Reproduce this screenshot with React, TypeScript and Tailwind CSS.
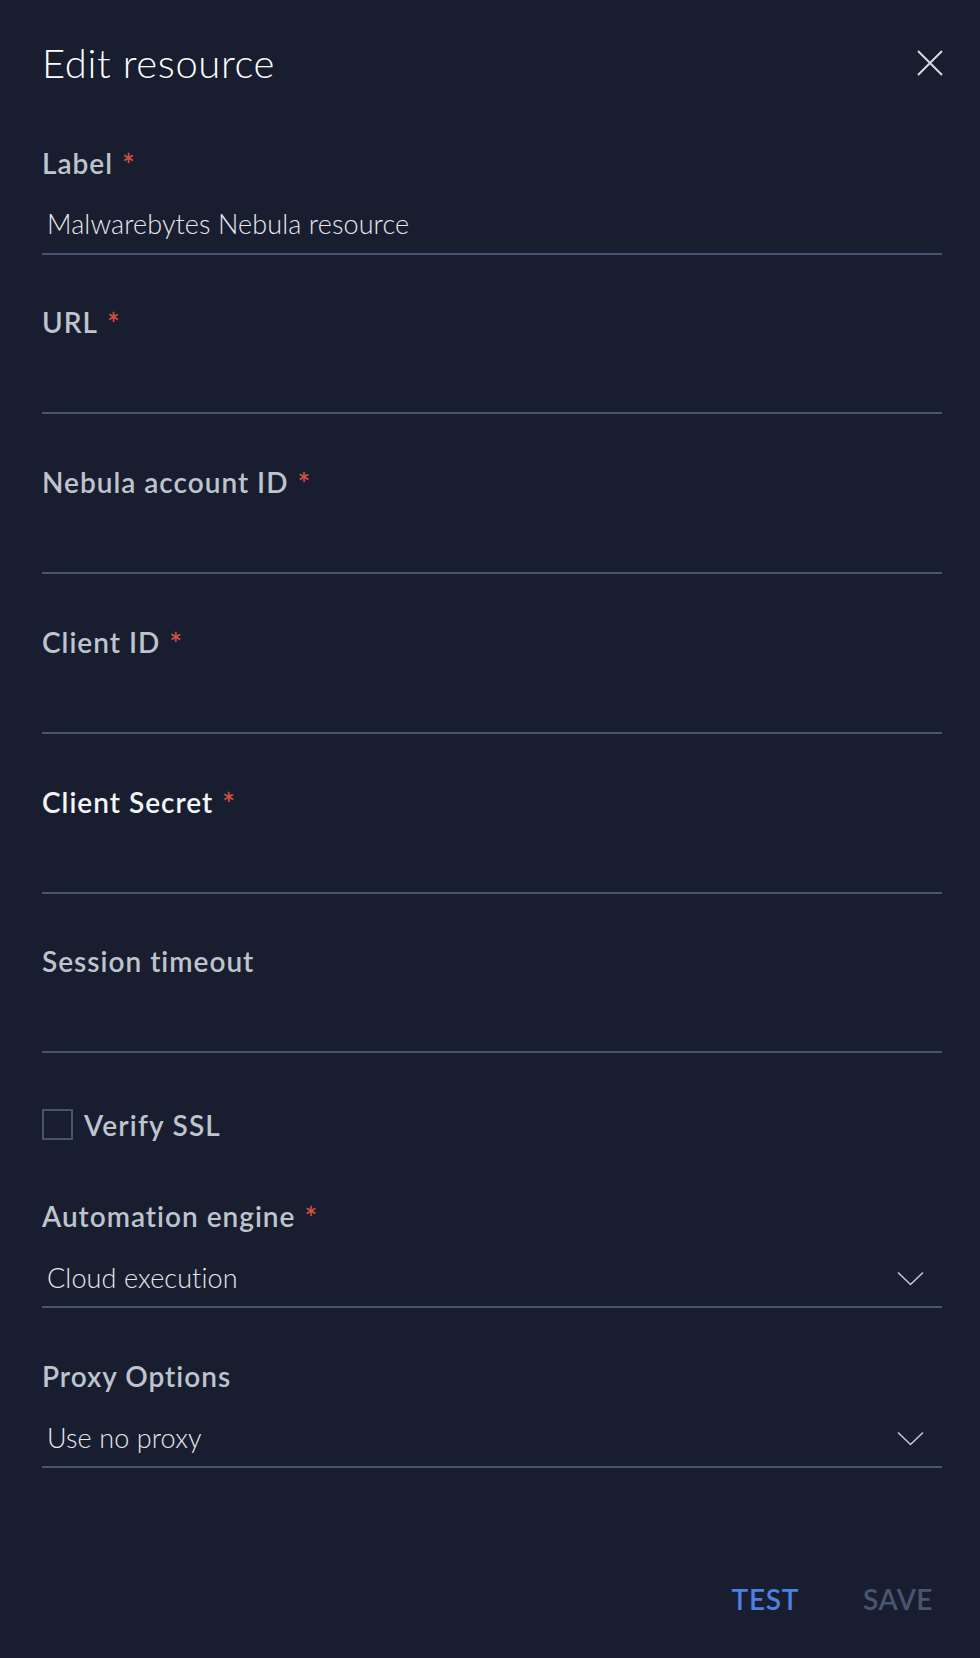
import React from "react";

const font = { fontFamily: "Lato, 'Noto Sans', sans-serif" };

function Field({ label, required, value, select, bright }: { label: string; required?: boolean; value?: string; select?: boolean; bright?: boolean }) {
  return (
    <div className="flex flex-col mb-[54.8px]">
      <div className={`h-[30px] -mt-[2px] flex items-center text-[28px] font-semibold leading-[30px] tracking-[1px] ${bright ? "text-[#f3f4f6]" : "text-[#bec4cd]"}`}>
        <span>{label}</span>
        {required && <span className="ml-[9px] text-[#d4503e] text-[30px] font-semibold leading-[30px] mt-[2px]">*</span>}
      </div>
      <div className="mt-[17px] h-[60px] flex items-center justify-between border-b-2 border-[#46536f] pl-[5px] pr-[18px]">
        <span className="text-[27px] font-light text-[#e6e8ec] leading-[30px] mt-[1px] tracking-[0.1px]">{value}</span>
        {select && (
          <svg width="27" height="15" viewBox="0 0 27 15" fill="none" className="mt-[2px]">
            <path d="M1 1.5 L13.5 13.5 L26 1.5" stroke="#c3c8d0" strokeWidth="1.6" />
          </svg>
        )}
      </div>
    </div>
  );
}

export default function App() {
  return (
    <div className="w-[980px] h-[1658px] bg-[#181e2f] flex flex-col pl-[42px] pr-[38px]" style={font}>
      <div className="pt-[39px] h-[87px] flex items-center justify-between">
        <h1 className="text-[40px] font-light text-white leading-[48px] tracking-[0.6px]">Edit resource</h1>
        <svg width="26" height="26" viewBox="0 0 26 26" className="mr-[-1px]">
          <path d="M1 1 L25 25 M25 1 L1 25" stroke="#d6d9df" strokeWidth="2" />
        </svg>
      </div>
      <div className="h-[62.5px]" />
      <Field label="Label" required value="Malwarebytes Nebula resource" />
      <Field label="URL" required />
      <Field label="Nebula account ID" required />
      <Field label="Client ID" required />
      <Field label="Client Secret" required bright />
      <div className="flex flex-col">
        <div className="h-[30px] -mt-[2px] flex items-center text-[28px] font-semibold leading-[30px] tracking-[1px] text-[#bec4cd]">Session timeout</div>
        <div className="mt-[17px] h-[60px] border-b-2 border-[#46536f]" />
      </div>
      <div className="mt-[56px] h-[31px] flex items-center">
        <div className="w-[31px] h-[31px] border-2 border-[#46536f]" />
        <span className="ml-[11px] text-[28px] font-semibold text-[#bec4cd] leading-[30px] tracking-[1.2px]">Verify SSL</span>
      </div>
      <div className="h-[63px]" />
      <Field label="Automation engine" required value="Cloud execution" select />
      <Field label="Proxy Options" value="Use no proxy" select />
      <div className="flex justify-end items-center mt-[61px] pr-[9px]">
        <button className="text-[28px] font-semibold text-[#4f7fe0] leading-[30px] tracking-[0.7px]">TEST</button>
        <button className="ml-[64px] text-[28px] font-semibold text-[#4a5570] leading-[30px] tracking-[0.5px]">SAVE</button>
      </div>
    </div>
  );
}
